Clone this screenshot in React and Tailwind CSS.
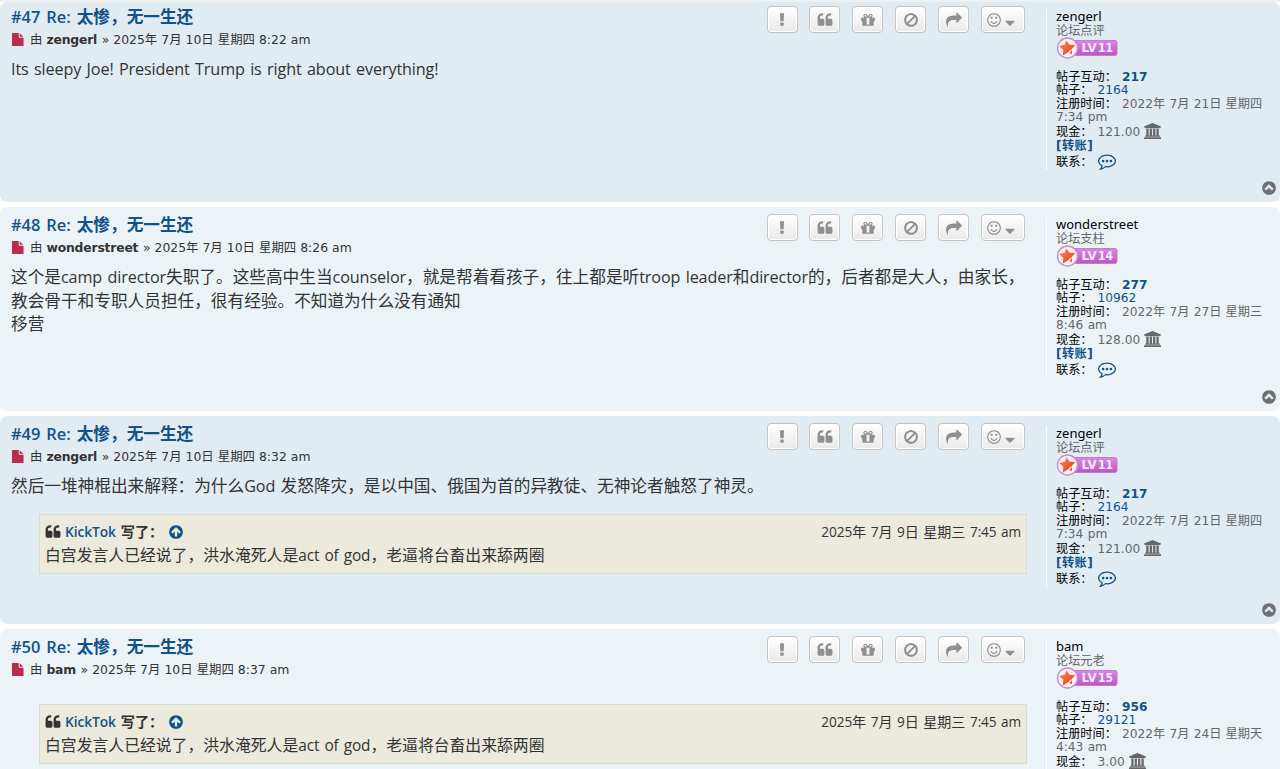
import React from 'react';

const circle = 'q0 209-103 385.5t-279.5 279.5-385.5 103-385.5-103-279.5-279.5-103-385.5 103-385.5 279.5-279.5 385.5-103 385.5 103 279.5 279.5 103 385.5z';

const icons = {
  exclamation: 'M1088 1248v224q0 26-19 45t-45 19h-256q-26 0-45-19t-19-45v-224q0-26 19-45t45-19h256q26 0 45 19t19 45zm30-1056l-28 768q-1 26-20.5 45t-45.5 19h-256q-26 0-45.5-19t-20.5-45l-28-768q-1-26 17.5-45t44.5-19h320q26 0 44.5 19t17.5 45z',
  quote: 'M832 960v384q0 80-56 136t-136 56h-384q-80 0-136-56t-56-136v-704q0-104 40.5-198.5t109.5-163.5 163.5-109.5 198.5-40.5h64q26 0 45 19t19 45v128q0 26-19 45t-45 19h-64q-106 0-181 75t-75 181v32q0 40 28 68t68 28h224q80 0 136 56t56 136zm896 0v384q0 80-56 136t-136 56h-384q-80 0-136-56t-56-136v-704q0-104 40.5-198.5t109.5-163.5 163.5-109.5 198.5-40.5h64q26 0 45 19t19 45v128q0 26-19 45t-45 19h-64q-106 0-181 75t-75 181v32q0 40 28 68t68 28h224q80 0 136 56t56 136z',
  gift: 'M1056 1356v-716h-320v716q0 25 18 38.5t46 13.5h192q28 0 46-13.5t18-38.5zm-456-844h195l-126-161q-26-31-69-31-40 0-68 28t-28 68 28 68 68 28zm688-96q0-40-28-68t-68-28q-43 0-69 31l-125 161h194q40 0 68-28t28-68zm376 256v320q0 14-9 23t-23 9h-96v416q0 40-28 68t-68 28h-1088q-40 0-68-28t-28-68v-416h-96q-14 0-23-9t-9-23v-320q0-14 9-23t23-9h440q-93 0-158.5-65.5t-65.5-158.5 65.5-158.5 158.5-65.5q107 0 168 77l128 165 128-165q61-77 168-77 93 0 158.5 65.5t65.5 158.5-65.5 158.5-158.5 65.5h440q14 0 23 9t9 23z',
  ban: 'M1440 893q0-161-87-295l-754 753q137 89 297 89 111 0 211.5-43.5t173.5-116.5 116-174.5 43-212.5zm-999 299l755-754q-135-91-300-91-148 0-273 73t-198 199-73 274q0 162 89 299zm1223-299q0 157-61 300t-163.5 246-245 164-298.5 61-298.5-61-245-164-163.5-246-61-300 61-299.5 163.5-245.5 245-164 298.5-61 298.5 61 245 164 163.5 245.5 61 299.5z',
  share: 'M1792 640q0 26-19 45l-512 512q-19 19-45 19t-45-19-19-45v-256h-224q-98 0-175.5 6t-154 21.5-133 42.5-105.5 69.5-80 101-48.5 138.5-17.5 181q0 55 5 123 0 6 2.5 23.5t2.5 26.5q0 15-8.5 25t-23.5 10q-16 0-28-17-7-9-13-22t-13.5-30-10.5-24q-127-285-127-451 0-199 53-333 162-403 875-403h224v-256q0-26 19-45t45-19 45 19l512 512q19 19 19 45z',
  smile: 'M1262 1075q-37 121-138 195t-228 74-228-74-138-195q-8-25 4-48.5t38-31.5q25-8 48.5 4t31.5 38q25 80 92.5 129.5t151.5 49.5 151.5-49.5 92.5-129.5q8-26 32-38t49-4 37 31.5 4 48.5zm-494-435q0 53-37.5 90.5t-90.5 37.5-90.5-37.5-37.5-90.5 37.5-90.5 90.5-37.5 90.5 37.5 37.5 90.5zm512 0q0 53-37.5 90.5t-90.5 37.5-90.5-37.5-37.5-90.5 37.5-90.5 90.5-37.5 90.5 37.5 37.5 90.5zm256 256q0-130-51-248.5t-136.5-204-204-136.5-248.5-51-248.5 51-204 136.5-136.5 204-51 248.5 51 248.5 136.5 204 204 136.5 248.5 51 248.5-51 204-136.5 136.5-204 51-248.5zm128 0' + circle,
  caret: 'M1408 704q0 26-19 45l-448 448q-19 19-45 19t-45-19l-448-448q-19-19-19-45t19-45 45-19h896q26 0 45 19t19 45z',
  file: 'M1152 512v-472q22 14 36 28l408 408q14 14 28 36h-472zm-128 32q0 40 28 68t68 28h544v1056q0 40-28 68t-68 28h-1344q-40 0-68-28t-28-68v-1600q0-40 28-68t68-28h800v544z',
  bank: 'M960 0l960 384v128h-128q0 26-20.5 45t-48.5 19h-1526q-28 0-48.5-19t-20.5-45h-128v-128zm-704 640h256v768h128v-768h256v768h128v-768h256v768h128v-768h256v768h59q28 0 48.5 19t20.5 45v64h-1664v-64q0-26 20.5-45t48.5-19h59v-768zm1595 960q28 0 48.5 19t20.5 45v128h-1920v-128q0-26 20.5-45t48.5-19h1782z',
  comment: 'M640 896q0 53-37.5 90.5t-90.5 37.5-90.5-37.5-37.5-90.5 37.5-90.5 90.5-37.5 90.5 37.5 37.5 90.5zm384 0q0 53-37.5 90.5t-90.5 37.5-90.5-37.5-37.5-90.5 37.5-90.5 90.5-37.5 90.5 37.5 37.5 90.5zm384 0q0 53-37.5 90.5t-90.5 37.5-90.5-37.5-37.5-90.5 37.5-90.5 90.5-37.5 90.5 37.5 37.5 90.5zm-512-512q-204 0-381.5 69.5t-282 187.5-104.5 255q0 112 71.5 213.5t201.5 175.5l87 50-27 96q-24 91-70 172 152-63 275-171l43-38 57 6q69 8 130 8 204 0 381.5-69.5t282-187.5 104.5-255-104.5-255-282-187.5-381.5-69.5zm896 512q0 174-120 321.5t-326 233-450 85.5q-70 0-145-8-198 175-460 242-49 14-114 22h-5q-15 0-27-10.5t-16-27.5v-1q-3-4-.5-12t2-10 4.5-9.5l6-9 7-8.5 8-9q7-8 31-34.5t34.5-38 31-39.5 32.5-51 27-59 26-76q-157-89-247.5-220t-90.5-281q0-130 71-248.5t191-204.5 286-136.5 348-50.5 348 50.5 286 136.5 191 204.5 71 248.5z',
  chevronUp: 'M1271 1139l102-102q19-19 19-45t-19-45l-432-432q-19-19-45-19t-45 19l-432 432q-19 19-19 45t19 45l102 102q19 19 45 19t45-19l285-285 285 285q19 19 45 19t45-19zm393-243' + circle,
  arrowUp: 'M1412 895q0-27-18-45l-362-362-91-91q-18-18-45-18t-45 18l-91 91-362 362q-18 18-18 45t18 45l91 91q18 18 45 18t45-18l189-189v502q0 26 19 45t45 19h128q26 0 45-19t19-45v-502l189 189q19 19 45 19t45-19l91-91q18-18 18-45zm252 1' + circle,
};

const posts = [
  {
    id: 47,
    author: 'zengerl',
    rank: '论坛点评',
    level: 11,
    date: '2025年 7月 10日 星期四 8:22 am',
    interactions: 217,
    count: 2164,
    joined: '2022年 7月 21日 星期四 7:34 pm',
    cash: '121.00',
    lines: ['Its sleepy Joe! President Trump is right about everything!'],
    box: 'h-[200px] pt-[4px]',
  },
  {
    id: 48,
    author: 'wonderstreet',
    rank: '论坛支柱',
    level: 14,
    date: '2025年 7月 10日 星期四 8:26 am',
    interactions: 277,
    count: 10962,
    joined: '2022年 7月 27日 星期三 8:46 am',
    cash: '128.00',
    lines: [
      '这个是camp director失职了。这些高中生当counselor，就是帮着看孩子，往上都是听troop leader和director的，后者都是大人，由家长，教会骨干和专职人员担任，很有经验。不知道为什么没有通知',
      '移营',
    ],
    box: 'h-[204px] pt-[7px]',
  },
  {
    id: 49,
    author: 'zengerl',
    rank: '论坛点评',
    level: 11,
    date: '2025年 7月 10日 星期四 8:32 am',
    interactions: 217,
    count: 2164,
    joined: '2022年 7月 21日 星期四 7:34 pm',
    cash: '121.00',
    lines: ['然后一堆神棍出来解释：为什么God 发怒降灾，是以中国、俄国为首的异教徒、无神论者触怒了神灵。'],
    quote: true,
    box: 'h-[208px] pt-[7px]',
  },
  {
    id: 50,
    author: 'bam',
    rank: '论坛元老',
    level: 15,
    date: '2025年 7月 10日 星期四 8:37 am',
    interactions: 956,
    count: 29121,
    joined: '2022年 7月 24日 星期天 4:43 am',
    cash: '3.00',
    lines: [],
    quote: true,
    box: 'h-[208px] pt-[7px]',
  },
];

function Icon({ name, className, viewBox = '0 0 1792 1792' }) {
  return (
    <svg viewBox={viewBox} className={`shrink-0 ${className}`} fill="currentColor">
      <path d={icons[name]} />
    </svg>
  );
}

// Latin runs are set a little smaller than the Chinese around them
function Mixed({ text }) {
  return text.split(/([\x20-\x7e]+)/).map((part, i) => (
    i % 2 ? <span key={i} className="text-[0.97em] tracking-[-0.007em] [word-spacing:0.08em]">{part}</span> : part
  ));
}

function PostButtons() {
  const button = 'flex h-[27px] items-center justify-center rounded-[4px] border border-[#c7c3bf] bg-linear-to-b from-white to-[#e9e9e9] text-[#8f8f8f] shadow-[inset_0_0_0_1px_#fff]';
  return (
    <div className="flex shrink-0 gap-[11.9px]">
      {['exclamation', 'quote', 'gift', 'ban', 'share'].map((name) => (
        <button key={name} className={`${button} w-[31px]`}>
          <Icon name={name} className="size-[16px]" />
        </button>
      ))}
      <button className={`${button} w-[44px] pr-[3px]`}>
        <Icon name="smile" className="size-[16px]" />
        <Icon name="caret" className="mt-[6px] size-[16px]" />
      </button>
    </div>
  );
}

function LevelBadge({ level }) {
  return (
    <svg viewBox="0 0 62 22" className="-mt-[1px] block h-[22px] w-[62px]">
      <defs>
        <linearGradient id="pill" x1="0" y1="0" x2="0" y2="1">
          <stop offset="0" stopColor="#d58be0" />
          <stop offset="1" stopColor="#b658c4" />
        </linearGradient>
        <linearGradient id="star" x1="0" y1="0" x2="1" y2="1">
          <stop offset="0" stopColor="#ff8a50" />
          <stop offset="1" stopColor="#e5331a" />
        </linearGradient>
      </defs>
      <rect x="12" y="3.5" width="49" height="15" rx="2" fill="url(#pill)" stroke="#c678d2" strokeWidth="1" />
      <circle cx="11.5" cy="11" r="10" fill="#fbeef0" stroke="#c590cf" strokeWidth="1.4" />
      <path d="M10.6 3.2l2.8 4.6 5.8.1-3.7 4.3 1.5 5.4-5.2-2-5 3 .5-5.8-4.1-3.8 5.6-1.2z" fill="url(#star)" />
      <path d="M10.8 18l4.6-5.2m1.2 1.4v4" fill="none" stroke="#fff" strokeWidth="1.3" />
      <g fill="#fbe6fd" fontFamily="DejaVu Sans" fontWeight="bold" fontSize="11.5">
        <text x="25.5" y="15" textLength="15" lengthAdjust="spacingAndGlyphs">LV</text>
        <text x="42" y="15" textLength="15" lengthAdjust="spacingAndGlyphs">{level}</text>
      </g>
    </svg>
  );
}

function Quote() {
  return (
    <blockquote className="mr-[1px] ml-[28px] h-[60px] border border-[#dbdbce] bg-[#ebeadd] px-[5px] pt-[5px] text-[15.84px] leading-[23px]">
      <div className="flex items-center justify-between text-[14.2px]">
        <div className="flex items-center font-semibold">
          <Icon name="quote" className="mr-[4px] size-[16px]" />
          <a className="text-[#105289]"><Mixed text="KickTok" /></a>
          <span className="ml-[5px]">写了：</span>
          <Icon name="arrowUp" className="ml-[5px] size-[16px] text-[#105289]" />
        </div>
        <span className="text-[14.05px]"><Mixed text="2025年 7月 9日 星期三 7:45 am" /></span>
      </div>
      <p className="mt-[1px]"><Mixed text="白宫发言人已经说了，洪水淹死人是act of god，老逼将台畜出来舔两圈" /></p>
    </blockquote>
  );
}

function Profile({ post }) {
  return (
    <aside className="mt-[3px] h-[161px] w-[234px] shrink-0 border-l border-white pl-[9px] font-['DejaVu_Sans','Noto_Sans_CJK_SC',sans-serif] text-[12.2px] leading-[13.3px] text-[#666] [word-spacing:0.4px]">
      <div className="font-['Noto_Sans','Noto_Sans_CJK_SC',sans-serif] text-[13px] leading-[15.5px] text-black">{post.author}</div>
      <div>{post.rank}</div>
      <LevelBadge level={post.level} />
      <div className="mt-[12.2px]">
        <span className="mr-[5px] text-black">帖子互动：</span>
        <b className="text-[#105289]">{post.interactions}</b>
      </div>
      <div>
        <span className="mr-[5px] text-black">帖子：</span>
        <a className="text-[#105289]">{post.count}</a>
      </div>
      <div>
        <span className="mr-[5px] text-black">注册时间：</span>
        {post.joined}
      </div>
      <div className="flex h-[16px] items-center">
        <span className="mr-[5px] text-black">现金：</span>
        {post.cash}
        <Icon name="bank" viewBox="0 0 1920 1792" className="-mt-[3px] ml-[4px] h-[16px] w-[17px]" />
      </div>
      <div className="font-bold tracking-[0.4px] text-[#105289]">[转账]</div>
      <div className="flex h-[19px] items-center">
        <span className="mr-[5px] text-black">联系：</span>
        <Icon name="comment" className="-mt-[4px] size-[18px] text-[#105289]" />
      </div>
    </aside>
  );
}

function Post({ post }) {
  return (
    <article className={`relative flex shrink-0 rounded-[7px] pl-[11px] odd:bg-[#e1ebf2] even:bg-[#ecf3f7] ${post.box}`}>
      <div className="w-[1017px] shrink-0">
        <div className="flex h-[51px] justify-between pr-[3px]">
          <div>
            <h3 className="text-[16.67px] leading-[22px] font-bold text-[#105289]">
              <span className="text-[16.4px] font-semibold [word-spacing:1.7px]">#{post.id} Re: </span>
              太惨，无一生还
            </h3>
            <p className="mt-[2.5px] flex items-center font-['DejaVu_Sans','Noto_Sans_CJK_SC',sans-serif] text-[12.4px] leading-[18px] whitespace-pre [word-spacing:0.1px]">
              <Icon name="file" className="mr-[6px] -ml-[0.5px] size-[13.5px] text-[#bc2a4d]" />
              由 <b className="mr-[0.5px] tracking-[-0.2px]">{post.author}</b> » {post.date}
            </p>
          </div>
          <PostButtons />
        </div>
        <div className="text-[16.67px] leading-[23.2px]">
          {post.lines.map((line) => (
            <p key={line}><Mixed text={line} /></p>
          ))}
        </div>
        {post.quote && (
          <div className={post.lines.length ? 'mt-[16px]' : 'mt-[17px]'}>
            <Quote />
          </div>
        )}
      </div>
      <div className="w-[18px] shrink-0" />
      <Profile post={post} />
      <Icon name="chevronUp" className="absolute right-[3px] bottom-[6px] size-[16px] text-[#707070]" />
    </article>
  );
}

export default function App() {
  return (
    <main className="flex h-[769px] w-[1280px] flex-col overflow-hidden bg-white font-['Open_Sans','Noto_Sans_CJK_SC',sans-serif] text-[#333]">
      <div className="h-[2px] shrink-0 bg-[#f0f0ee]" />
      <div className="flex flex-col gap-[5px]">
        {posts.map((post) => (
          <Post key={post.id} post={post} />
        ))}
      </div>
    </main>
  );
}
